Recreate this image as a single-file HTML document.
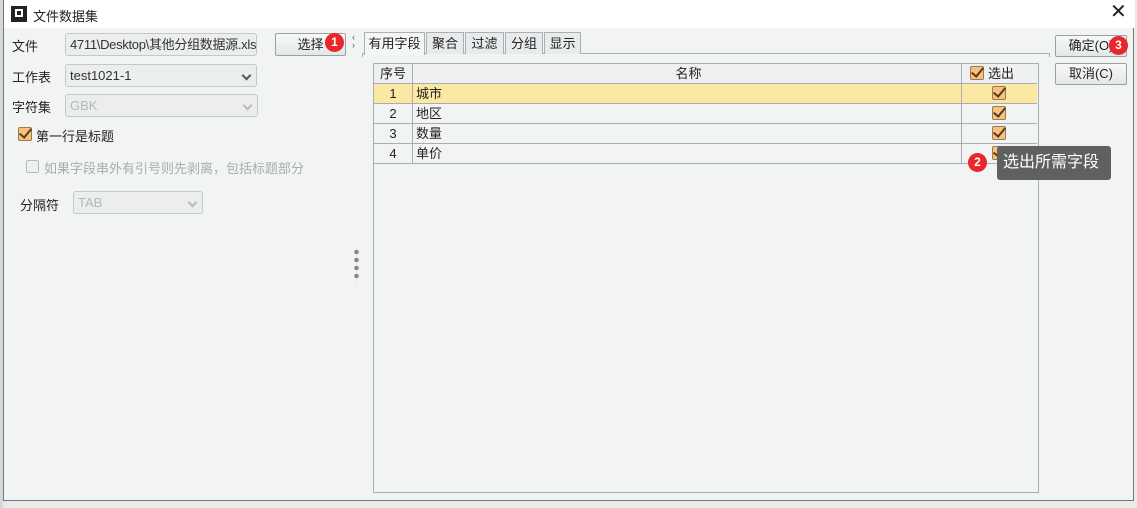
<!DOCTYPE html>
<html><head><meta charset="utf-8"><style>
*{box-sizing:border-box;margin:0;padding:0}
body{width:1137px;height:508px;background:#e9eaea;font-family:"Liberation Sans","Noto Sans CJK SC",sans-serif;font-size:13px;color:#222;position:relative;overflow:hidden}
.a{position:absolute}
.dlg{left:3px;top:0;width:1131px;height:501px;background:#f2f4f3;border:1px solid #777;border-top:none}
.title{left:0;top:0;width:1131px;height:28px;background:#fff}
.inp{border:1px solid #c3c8cc;border-radius:3px;background:#eceeee;height:23px;line-height:21px;padding-left:4px;font-size:13px;white-space:nowrap;overflow:hidden}
.dis{color:#b5b9bc}
.arr{position:absolute;right:6px;top:7px;width:7px;height:7px;border-right:2px solid #555;border-bottom:2px solid #555;transform:rotate(45deg)}
.btn{border:1px solid #9aa0a6;border-radius:2px;background:linear-gradient(#f8f9f9,#e4e6e7);text-align:center;line-height:20px;font-size:13px}
.badge{width:19px;height:19px;border-radius:50%;background:#e8262b;color:#fff;font-size:12px;text-align:center;line-height:19px;font-weight:bold}
.cb{width:14px;height:14px;border:1px solid #9a7a55;border-radius:2px;background:#f6c27e;position:absolute}
.cb:after{content:"";position:absolute;left:3px;top:-2px;width:5px;height:10px;border-right:2px solid #5a3b1c;border-bottom:2px solid #5a3b1c;transform:rotate(40deg)}
.tab{top:32px;height:22px;border:1px solid #aab0b5;border-bottom:none;background:#e8eaeb;text-align:center;line-height:21px;font-size:13px}
.row{left:374px;width:663px;height:20px;border-bottom:1px solid #a7adb3;font-size:13px;line-height:19px}
.c1{position:absolute;left:0;width:39px;text-align:center;border-right:1px solid #a7adb3;height:19px}
.c2{position:absolute;left:39px;width:549px;border-right:1px solid #a7adb3;height:19px;padding-left:3px}
</style></head><body>
<div class="a" style="left:0;top:0;width:3px;height:508px;background:#d5d8da"></div>
<div class="a dlg">
 <div class="a title"></div>
</div>
<div class="a" style="left:11px;top:6px;width:16px;height:16px;background:#222"><div class="a" style="left:4px;top:3px;width:8px;height:8px;border:2px solid #fff"></div></div>
<div class="a" style="left:33px;top:6px;font-size:13px">文件数据集</div>
<div class="a" style="left:1110px;top:2px;font-size:20px;line-height:20px">✕</div>

<div class="a" style="left:12px;top:36px">文件</div>
<div class="a inp" style="left:65px;top:33px;width:192px;color:#333;letter-spacing:-0.3px">4711\Desktop\其他分组数据源.xls</div>
<div class="a btn" style="left:275px;top:33px;width:71px;height:23px;line-height:21px">选择</div>
<div class="a badge" style="left:325px;top:33px">1</div>
<div class="a" style="left:352px;top:33px;font-size:9px;color:#555;line-height:8px">‹<br>›</div>
<div class="a" style="left:12px;top:67px">工作表</div>
<div class="a inp" style="left:65px;top:64px;width:192px;color:#333">test1021-1<span class="arr"></span></div>
<div class="a" style="left:12px;top:97px">字符集</div>
<div class="a inp dis" style="left:65px;top:94px;width:193px">GBK<span class="arr" style="border-color:#bbb"></span></div>
<div class="cb" style="left:18px;top:127px"></div>
<div class="a" style="left:36px;top:126px">第一行是标题</div>
<div class="a" style="left:26px;top:160px;width:13px;height:13px;border:1px solid #b5babd;border-radius:2px;background:#eef0f0"></div>
<div class="a dis" style="left:44px;top:158px;color:#a9adb0">如果字段串外有引号则先剥离，包括标题部分</div>
<div class="a" style="left:20px;top:195px">分隔符</div>
<div class="a inp dis" style="left:73px;top:191px;width:130px">TAB<span class="arr" style="border-color:#bbb"></span></div>
<div class="a" style="left:354px;top:248px;width:5px;height:34px;background:radial-gradient(circle,#888 2px,transparent 2.5px) 0 0/5px 8px"></div>

<div class="a" style="left:362px;top:53px;width:688px;height:4px;border:1px solid #aab0b5;border-bottom:none"></div>
<div class="a tab" style="left:364px;width:61px;background:#f4f5f5;height:23px">有用字段</div>
<div class="a tab" style="left:426px;width:38px">聚合</div>
<div class="a tab" style="left:465px;width:39px">过滤</div>
<div class="a tab" style="left:505px;width:38px">分组</div>
<div class="a tab" style="left:544px;width:37px">显示</div>

<div class="a" style="left:373px;top:63px;width:666px;height:430px;border:1px solid #a7adb3;background:#f2f4f3"></div>
<div class="a row" style="top:64px;background:#eef0f1"><div class="c1">序号</div><div class="c2" style="text-align:center">名称</div><div class="cb" style="left:596px;top:2px"></div><div class="a" style="left:614px;top:0">选出</div></div>
<div class="a row" style="top:84px;background:#fbe8a2"><div class="c1">1</div><div class="c2">城市</div><div class="cb" style="left:618px;top:2px"></div></div>
<div class="a row" style="top:104px"><div class="c1">2</div><div class="c2">地区</div><div class="cb" style="left:618px;top:2px"></div></div>
<div class="a row" style="top:124px"><div class="c1">3</div><div class="c2">数量</div><div class="cb" style="left:618px;top:2px"></div></div>
<div class="a row" style="top:144px"><div class="c1">4</div><div class="c2">单价</div><div class="cb" style="left:618px;top:2px"></div></div>

<div class="a" style="left:997px;top:146px;width:114px;height:34px;background:#5f615f;border-radius:3px;color:#fff;font-size:16px;line-height:34px;padding-left:6px">选出所需字段</div>
<div class="a badge" style="left:968px;top:153px">2</div>

<div class="a btn" style="left:1055px;top:35px;width:72px;height:22px">确定(O)</div>
<div class="a badge" style="left:1109px;top:36px">3</div>
<div class="a btn" style="left:1055px;top:63px;width:72px;height:22px">取消(C)</div>
</body></html>
